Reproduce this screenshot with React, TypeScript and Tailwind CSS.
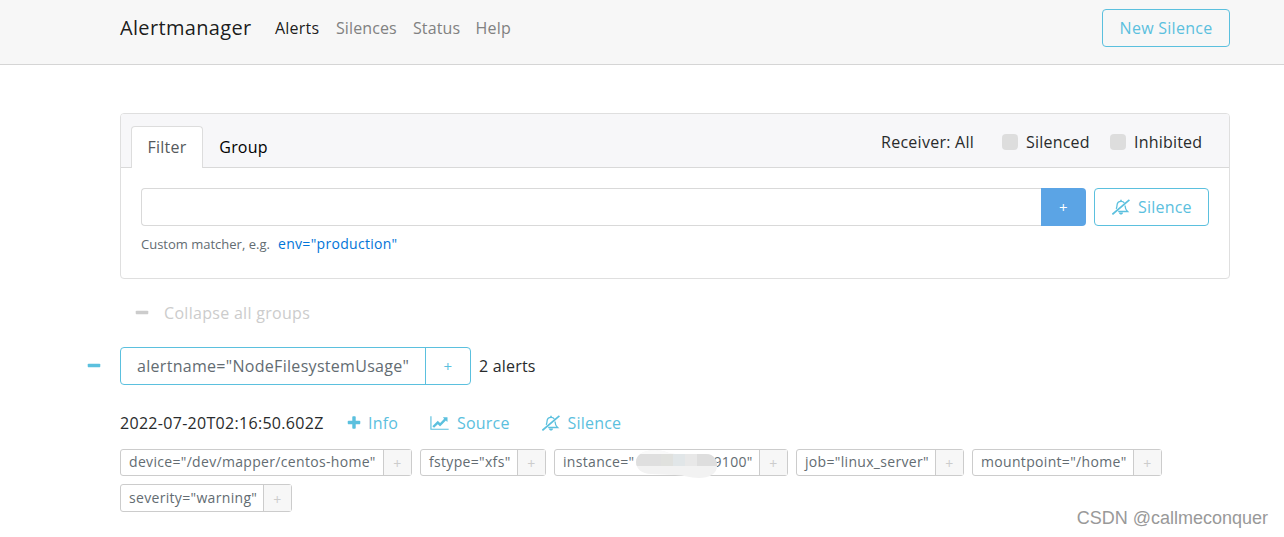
import type { ReactNode } from "react";

const PLUS =
  "M1600 736v192q0 40-28 68t-68 28h-416v416q0 40-28 68t-68 28h-192q-40 0-68-28t-28-68v-416h-416q-40 0-68-28t-28-68v-192q0-40 28-68t68-28h416v-416q0-40 28-68t68-28h192q40 0 68 28t28 68v416h416q40 0 68 28t28 68z";
const MINUS =
  "M1600 736v192q0 40-28 68t-68 28h-1216q-40 0-68-28t-28-68v-192q0-40 28-68t68-28h1216q40 0 68 28t28 68z";
const CHART =
  "M2048 1536v128h-2048v-1536h128v1408h1920zM1920 288v435q0 21-19.5 29.5t-35.5-7.5l-121-121-633 633q-10 10-23 10t-23-10l-233-233-416 416-192-192 585-585q10-10 23-10t23 10l233 233 464-464-121-121q-16-16-7.5-35.5t29.5-19.5h435q14 0 23 9t9 23z";

function Glyph({ d, className }: { d: string; className: string }) {
  return (
    <svg viewBox="0 0 1792 1792" fill="currentColor" className={className}>
      <path d={d} />
    </svg>
  );
}

function BellSlash() {
  return (
    <svg viewBox="0 0 18 16" fill="none" stroke="currentColor" className="h-4 w-[18px] shrink-0">
      <path d="M0.4 15.4 17.4 0.8" strokeWidth="1.7" />
      <path
        d="M4.2 9.8C4.9 8.6 5 7.2 5.1 5.8 5.3 3.6 7 2.3 9 2.3c1.5 0 2.7 0.6 3.3 1.7M13 6.5c0.1 2.5 0.7 4.4 2.6 6H6.2"
        strokeWidth="1.3"
      />
      <path d="M9 0.8v1.5" strokeWidth="1.5" />
      <path d="M7 13.4h4c-0.1 1.4-0.9 2.2-2 2.2s-1.9-0.8-2-2.2z" fill="currentColor" stroke="none" />
    </svg>
  );
}

function NavBar() {
  return (
    <header className="flex h-[65px] items-start border-b border-[#d5d5d5] bg-[#f7f7f7] pr-[54px] pl-[120px]">
      <nav className="flex h-[55px] items-center text-[16px] text-[#818181]">
        <a className="w-[155px] text-[20px] tracking-[0.33px] text-black/90">Alertmanager</a>
        <a className="w-[61px] text-black/90">Alerts</a>
        <a className="w-[77px] tracking-[0.1px]">Silences</a>
        <a className="w-[62.5px] tracking-[0.1px]">Status</a>
        <a>Help</a>
      </nav>
      <button className="mt-[9px] ml-auto h-[38px] w-32 rounded border border-[#5bc0de] pb-px text-[16px] tracking-[0.27px] text-[#5bc0de]">
        New Silence
      </button>
    </header>
  );
}

function Check({ children, className }: { children: ReactNode; className: string }) {
  return (
    <label className={`flex items-center gap-2 ${className}`}>
      <span className="size-4 rounded bg-[#ddd]" />
      <span className="-mt-px">{children}</span>
    </label>
  );
}

function FilterCard() {
  return (
    <section className="h-[166px] rounded border border-[#dfdfdf] text-[16px]">
      <div className="flex h-[54px] items-end rounded-t-[3px] border-b border-[#d9d9d9] bg-[#f7f7f9] pl-2.5">
        <div className="-mb-px flex h-[42px] w-[72px] items-center justify-center rounded-t border border-b-0 border-[#ddd] bg-white pb-0.5 text-[#55595c]">
          Filter
        </div>
        <div className="flex h-[41px] w-[81px] items-center justify-center text-black">Group</div>
        <div className="mb-[13px] ml-auto flex h-6 items-center">
          <span className="-mt-px w-[121px] tracking-[0.27px]">Receiver: All</span>
          <Check className="w-[108px]">Silenced</Check>
          <Check className="w-[119px]">Inhibited</Check>
        </div>
      </div>
      <div className="px-5 pt-5">
        <div className="flex h-[38px]">
          <div className="flex-1 rounded-l border border-r-0 border-[#d9d9d9] bg-white" />
          <button className="w-[45px] rounded-r bg-[#5ba4e5] text-[15px] text-white">+</button>
          <button className="ml-2 flex w-[115px] items-center gap-2 rounded border border-[#5bc0de] pl-[17px] text-[#5bc0de]">
            <BellSlash />
            <span className="-mt-px">Silence</span>
          </button>
        </div>
        <div className="mt-[5px] flex h-6 items-center">
          <span className="mt-1 w-[137px] text-[13px] tracking-normal text-[#636c72]">Custom matcher, e.g.</span>
          <a className="text-[14px] tracking-[0.3px] text-[#0275d8]">env="production"</a>
        </div>
      </div>
    </section>
  );
}

function Label({ children, className }: { children: ReactNode; className: string }) {
  return (
    <div className={`flex rounded-[3px] border border-[#ccc] text-[14px] tracking-[0.32px] text-[#636c72] ${className}`}>
      <span className="flex flex-1 items-center pb-0.5 pl-2 whitespace-nowrap">{children}</span>
      <span className="flex w-7 items-center justify-center border-l border-[#ccc] bg-[#f7f7f7] pt-0.5 text-[#ccc]">
        +
      </span>
    </div>
  );
}

function Redaction() {
  return (
    <span className="relative block h-5 w-[79px]">
      <svg viewBox="0 0 84 28" className="absolute -top-[2px] left-0 h-7 w-[84px]">
        <defs>
          <clipPath id="smear">
            <path d="M1 12C1 5 8 0 20 0 31 0 32 4 41 4H71C79 4 82 10 82 16 82 24 74 28 64 28 54 28 50 25 40 25L16 24C7 24 1 19 1 12Z" />
          </clipPath>
        </defs>
        <g clipPath="url(#smear)">
          <path d="M0 0h84v28H0z" fill="#f2f2f2" />
          <path d="M0 0h84v4H0z" fill="#fafafa" />
          <path d="M0 4h26v12H0z" fill="#dfdfdf" />
          <path d="M26 4h12v12H26z" fill="#e0e1de" />
          <path d="M38 4h12v12H38z" fill="#e1e6e8" />
          <path d="M50 4h12v12H50z" fill="#e8e8e8" />
          <path d="M62 4h22v12H62z" fill="#dedede" />
        </g>
      </svg>
    </span>
  );
}

function Alert() {
  return (
    <article className="mt-[26px] pl-[120px] text-[16px]">
      <div className="flex h-6 items-center text-[#5bc0de]">
        <span className="-mt-px w-[226px] tracking-[0.3px] text-[#292b2c]">2022-07-20T02:16:50.602Z</span>
        <a className="flex w-[84px] items-center gap-1.5">
          <Glyph d={PLUS} className="size-4" />
          <span className="-mt-px">Info</span>
        </a>
        <a className="flex w-[111.5px] items-center gap-2">
          <svg viewBox="0 0 2048 1792" fill="currentColor" className="h-4 w-[19px]">
            <path d={CHART} />
          </svg>
          <span className="-mt-px">Source</span>
        </a>
        <a className="flex items-center gap-2">
          <BellSlash />
          <span className="-mt-px">Silence</span>
        </a>
      </div>
      <div className="mt-3.5 flex flex-wrap gap-2">
        <Label className="h-[27px] w-[292px]">device="/dev/mapper/centos-home"</Label>
        <Label className="h-[27px] w-[126px]">fstype="xfs"</Label>
        <Label className="h-[27px] w-[234px]">
          instance="
          <Redaction />
          9100"
        </Label>
        <Label className="h-[27px] w-[168px]">job="linux_server"</Label>
        <Label className="h-[27px] w-[190px]">mountpoint="/home"</Label>
        <Label className="h-7 w-[172px]">severity="warning"</Label>
      </div>
    </article>
  );
}

export default function App() {
  return (
    <div className="relative h-[537px] overflow-hidden bg-white font-['Open_Sans','Noto_Sans',sans-serif] tracking-[0.2px] text-[#292b2c]">
      <NavBar />
      <main>
        <div className="mt-12 pr-[54px] pl-[120px]">
          <FilterCard />
        </div>
        <div className="mt-[22px] flex h-6 items-center pl-[134px] text-[16px] tracking-[0.3px] text-[#ccc]">
          <Glyph d={MINUS} className="mr-3.5 size-4" />
          <span className="-mt-px">Collapse all groups</span>
        </div>
        <div className="mt-[22px] flex h-[38px] items-center pl-[86px] text-[16px]">
          <Glyph d={MINUS} className="mr-[18px] size-4 text-[#5bc0de]" />
          <div className="mr-2 flex h-[38px] w-[351px] rounded border border-[#5bc0de]">
            <span className="flex flex-1 items-center pb-px pl-4 tracking-[0.3px] text-[#636c72]">
              alertname="NodeFilesystemUsage"
            </span>
            <span className="flex w-[45px] items-center justify-center border-l border-[#5bc0de] text-[15px] text-[#5bc0de]">
              +
            </span>
          </div>
          <span className="-mt-px">2 alerts</span>
        </div>
        <Alert />
      </main>
      <div className="absolute right-4 bottom-[5px] font-['Liberation_Sans',sans-serif] text-[18px] tracking-normal text-[#999]">
        CSDN @callmeconquer
      </div>
    </div>
  );
}
